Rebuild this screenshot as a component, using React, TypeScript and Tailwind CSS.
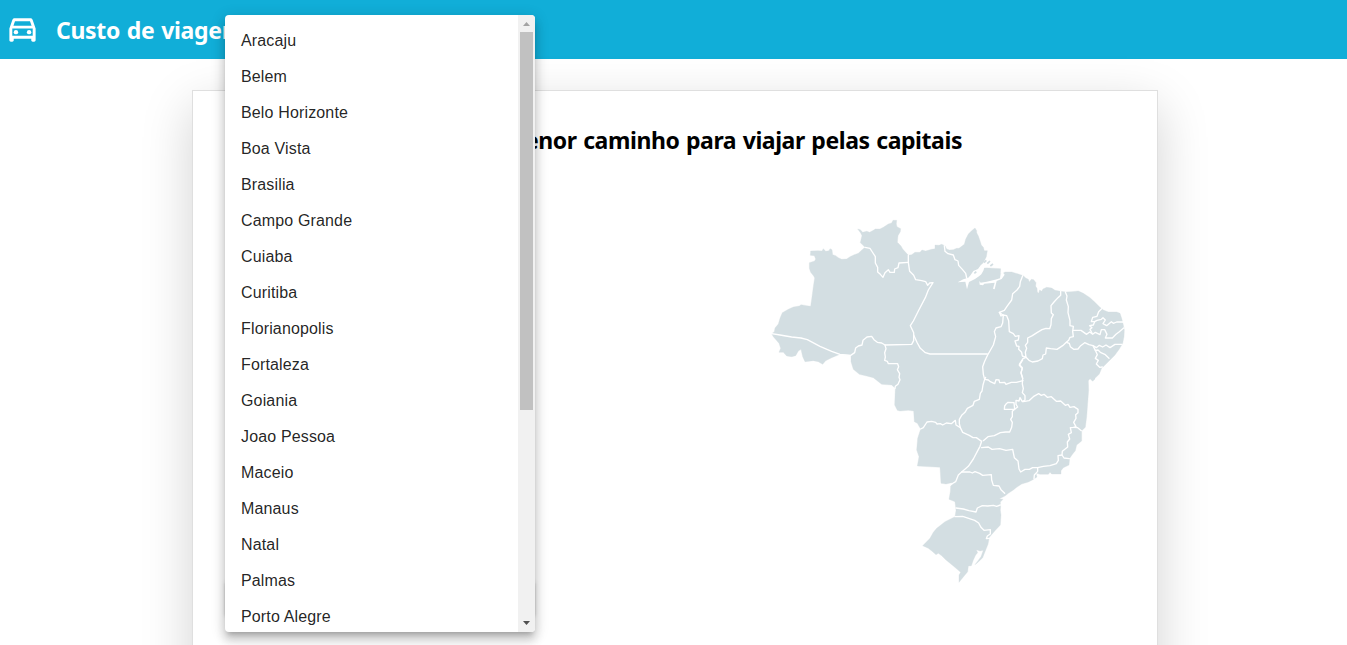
import { MdOutlineDirectionsCar } from "react-icons/md";

const capitals = [
  "Aracaju", "Belem", "Belo Horizonte", "Boa Vista", "Brasilia", "Campo Grande",
  "Cuiaba", "Curitiba", "Florianopolis", "Fortaleza", "Goiania", "Joao Pessoa",
  "Maceio", "Manaus", "Natal", "Palmas", "Porto Alegre",
];

// Moves a "x,y x,y ..." point list by the given offset.
const shift = (dx: number, dy: number, list: string) =>
  list
    .trim()
    .split(/\s+/)
    .map((p) => {
      const [x, y] = p.split(",").map(Number);
      return `${x + dx},${y + dy}`;
    })
    .join(" ");

const outline = [
  "20,371 28,365 30,354 40,342 45,325 52,308 70,298 85,291 103,288 108,284 125,287 137,289 141,260 145,230 149,204 146,198 137,187 133,175 133,158 149,153 152,147 148,137 136,136 137,123 160,122 171,123 175,116 182,124 192,122 195,116 201,119 203,134 212,137 220,143 230,148 245,147 255,140 268,134 280,130 288,122 300,112 291,103 286,98 289,85 291,77 287,69 278,57 286,59 293,67 305,64 314,67 325,61 331,57 345,57 355,52 370,42 380,39 384,31 395,31 394,42 396,50 407,56 406,65 399,77 397,97 408,108 413,117 430,136 440,134 450,127 465,127 471,120 482,123 500,118 510,116 510,105 522,106 530,103 540,107",
  shift(525, 0, "20,117 28,120 40,119 50,115 57,115 65,109 73,103 77,88 85,72 95,62 105,54 110,62 110,68 115,78 120,92 124,105 130,112 133,122 142,122 139,140 133,152 127,165 133,173 145,174 182,176 181,191 187,191 195,186 215,186 235,192 250,197 257,204 265,208 268,216 274,208 281,209 288,218 287,229 291,235 292,246 296,250 299,240 305,244 309,237 320,232 335,234 345,241 362,244 378,246 395,245 415,243 430,250 450,263 465,277 480,292 490,300 505,306 530,306 540,310 545,325 550,345 553,360 552,380 548,400 538,417 525,435 510,450 495,465 485,475 478,492 465,505"),
  shift(585, 390, "405,117 398,124 390,116 385,122 386,150 383,190 380,230 376,262 365,272 365,303 350,315 346,332 338,342 329,355 327,375 310,383 303,392 303,402 275,402 270,397 265,403 240,403 228,399 231,411 217,420 205,426 185,432 170,442 160,450"),
  shift(435, 750, "295,100 285,108 268,116 279,118 271,126 272,140 271,150 273,165 271,195 255,212 238,232 234,253 225,275 218,293 205,306 195,314 213,290 220,271 210,273 199,269 203,278 197,285 190,300 184,317 175,318 173,335 160,351 147,367 147,345 152,337 130,318 108,300 95,287 85,280 78,284 68,275 55,265 38,257 60,235 70,217 80,205 105,185 135,170 138,151 135,125 117,118 121,95 122,78 128,73 125,68 108,72 93,70 90,22 22,18"),
  shift(225, 390, "232,378 237,350 230,330 233,295 242,267 232,250 223,245 221,213 205,211 180,213 172,211 164,195 166,145 155,135 125,133 100,113 80,108 58,103 40,88 33,65 33,45 0,43"),
  "200,443 182,452 173,463 160,455 145,452 120,455 113,440 108,418 100,423 92,437 80,440 65,438 55,427 42,427 47,415 42,400 25,380",
].join(" ");

const rivers = [
  shift(555, 45, "112,95 104,110 92,121 84,132 70,138 62,150 55,158 40,163 23,172 46,170 51,193 57,171 75,162 88,153 94,148 100,137 103,128 112,126 106,118"),
  shift(555, 45, "88,168 92,173 110,170 135,164 150,160 152,146 158,142 164,149 155,162 140,168 134,193 129,191 134,173 103,176 99,181 89,179"),
];

const borders = [
  // Acre, Amazonas, Roraima, Rondônia
  "20,371 45,375 80,381 108,384 127,389 165,409 200,424 225,433 257,436 269,428 272,414 280,408 291,405 294,391 306,381 320,379 327,389 337,397 350,399 360,405 440,403 446,392 446,368 436,347 445,333 460,303 481,263 490,240 504,218 494,219 488,226 482,215 470,212 452,209 446,196 434,184 430,158 430,136",
  "300,112 315,115 322,126 331,140 331,159 338,172 338,186 346,193 354,202 360,188 370,179 375,187 388,187 389,177 399,173 402,159 430,157",
  // Pará and Mato Grosso
  "446,375 457,399 466,415 481,428 495,432 667,432",
  "360,405 363,416 359,428 361,441 359,451 367,454 370,461 398,461 401,470 397,479 404,491 402,502 405,509 399,523 391,529 390,535",
  "538,107 540,124 549,131 565,135 570,149 579,153 581,166 592,178 602,190 605,204",
  // Maranhão, Tocantins, Piauí
  shift(525, 0, "248,197 241,215 239,229 231,240 218,251 215,270 201,289 193,301 178,307 183,318 190,315 188,339 183,350 168,354 163,365 167,380 160,405 143,435 134,454 128,470 130,493 134,508"),
  shift(525, 0, "178,307 188,315 200,317 206,332 208,365 220,371 226,379 237,377 235,390 225,393 230,408 237,409 236,418 245,427 247,438 258,442 256,427 260,415 256,406 263,397 263,384 277,377 291,368 306,359 318,355 329,356 333,344 334,326 340,314 334,309 333,287 342,276 354,263 362,256 362,244"),
  shift(525, 0, "376,246 381,258 379,270 385,290 384,308 390,332 390,347 400,349 398,364 400,380 390,382 386,391 379,397 368,407 351,418 332,416 319,414 317,432 309,435 307,446 294,453 277,456 267,451 258,442 249,446 238,463 247,473 243,488 248,506"),
  // North-east states
  shift(525, 0, "485,296 476,305 471,319 458,322 454,335 464,335 471,331 484,328 489,323 496,330 489,341 500,347 514,335 520,340 530,336 550,336"),
  shift(525, 0, "400,361 423,361 440,373 449,366 458,373 466,367 480,374 484,359 494,359 501,373 496,384 517,384 528,373 538,365 551,354"),
  shift(525, 0, "464,335 460,345 449,347 456,353 450,358 456,369"),
  shift(525, 0, "379,397 388,400 391,410 401,418 414,417 422,407 434,398 447,404 459,407 469,413 478,406 488,411 498,405 510,413 525,403 546,403"),
  shift(525, 0, "459,407 466,421 474,420 481,427 496,434 507,445"),
  shift(525, 0, "466,421 472,434 466,445 475,451 469,462 479,472 487,471"),
  // Goiás, Tocantins, Bahia
  shift(585, 390, "74,118 85,120 91,125 104,131 108,119 117,120 119,128 134,127 138,133 154,127 169,127 189,122"),
  shift(585, 390, "188,60 178,76 187,86 183,99 188,114 187,132 190,146 187,158 195,167 195,180 187,185 180,173 177,183 168,181 168,193 173,201 165,207 157,214 157,230 152,238 157,247 155,262 149,276 137,276 121,278 103,287 84,290 70,302"),
  shift(585, 390, "190,185 207,182 220,170 236,161 244,166 252,163 262,172 274,170 289,184 302,183 316,196 324,193 330,202 342,200 354,208 354,218 347,224 348,235 341,247 348,260 341,262 331,263 334,278 325,283 329,297 322,306 323,321 307,334 306,345 294,347 295,361 289,371 270,377 250,379 233,383 218,383 208,388 195,388 182,396 177,387 174,363 163,353 158,328 138,331 119,326 96,328 85,321 65,323"),
  shift(585, 390, "341,262 353,263 364,272"),
  shift(585, 390, "306,345 312,354 328,356"),
  shift(585, 390, "233,383 233,394 223,405 222,416"),
  shift(585, 390, "139,191 144,187 162,188 164,208 133,208 134,198 139,191"),
  // Mato Grosso, Mato Grosso do Sul, São Paulo
  shift(225, 390, "437,112 433,121 429,135 426,153 421,160 418,178 403,184 399,196 382,205 375,217 365,226 358,238 358,251 361,263 368,277 388,286 399,293 409,293 425,304 420,319 412,334 400,357 385,379 365,396 355,405 347,425 335,432"),
  shift(225, 390, "242,267 250,263 261,246 275,244 287,247 291,252 301,251 308,255 319,249 334,251 346,241 348,255 361,263"),
  shift(225, 390, "365,396 390,396 397,399 405,395 419,400 428,406 454,404 455,420 460,436 477,438 483,449 494,460"),
  // Southern states
  shift(435, 750, "138,144 160,147 177,152 198,156 202,144 217,137 233,138 250,136 260,139 271,135"),
  shift(435, 750, "135,170 158,169 176,175 194,181 206,189 213,202 222,211 241,209 241,222 232,228 229,236 239,235"),
];

function BrazilMap() {
  return (
    <svg className="block h-[380px] w-[380px]" viewBox="0 0 1140 1140" aria-label="Brasil">
      <polygon points={outline} fill="#d3dee2" stroke="#d3dee2" strokeWidth="1" />
      {rivers.map((points) => (
        <polygon key={points} points={points} fill="#fff" />
      ))}
      <path d="M657 158l7-7M667 161l8-8M676 168l8-6M628 190l6-5" fill="none" stroke="#d3dee2" strokeWidth="5" />
      <g fill="none" stroke="#fff" strokeWidth="4" strokeLinejoin="round" strokeLinecap="round">
        {borders.map((points) => (
          <polyline key={points} points={points} />
        ))}
      </g>
    </svg>
  );
}

function CapitalMenu() {
  return (
    <div className="absolute left-[225px] top-[15px] flex h-[617px] w-[310px] overflow-hidden rounded bg-white shadow-[0_5px_5px_-3px_rgba(0,0,0,0.2),0_8px_10px_1px_rgba(0,0,0,0.14),0_3px_14px_2px_rgba(0,0,0,0.12)]">
      <ul className="flex-1 overflow-hidden py-2 font-['Liberation_Sans',Arial,sans-serif] text-base tracking-[0.15px] text-black/87">
        {capitals.map((name) => (
          <li key={name} className="flex h-9 items-center px-4 leading-6">{name}</li>
        ))}
      </ul>
      <div className="flex w-[17px] flex-col items-center bg-[#f1f1f1]">
        <svg className="h-[17px] w-[17px] shrink-0" viewBox="0 0 17 17">
          <path d="M5 11h7L8.500 7z" fill="#a3a3a3" />
        </svg>
        <div className="h-[378px] w-[13px] bg-[#c1c1c1]" />
        <svg className="mt-auto h-[17px] w-[17px] shrink-0" viewBox="0 0 17 17">
          <path d="M5 6h7L8.500 10z" fill="#505050" />
        </svg>
      </div>
    </div>
  );
}

export default function App() {
  return (
    <div className="relative h-[645px] overflow-hidden bg-white font-['Noto_Sans','Open_Sans',sans-serif]">
      <header className="flex h-[59px] items-center bg-[#11aed8] pl-[5px] text-white">
        <MdOutlineDirectionsCar className="mb-[2px] size-[35px]" />
        <span className="ml-4 mt-[2px] whitespace-nowrap text-[23px] font-bold tracking-[-0.3px] [word-spacing:1px]">Custo de viagem</span>
      </header>
      <main className="ml-[192px] mt-[31px] h-[700px] w-[966px] border border-black/[0.125] bg-white px-8 shadow-[0_16px_48px_rgba(0,0,0,0.175)]">
        <h1 className="mt-[31px] whitespace-nowrap pr-[163px] text-right text-[23px] font-bold leading-9 tracking-[-0.43px] text-black [word-spacing:1px]">
          Descubra o menor caminho para viajar pelas capitais
        </h1>
        <div className="mt-[52px] flex justify-between">
          <div className="flex h-[406px] w-[310px] flex-col justify-end">
            <div className="h-[36px] rounded shadow-[0_3px_1px_-2px_rgba(0,0,0,0.2),0_2px_2px_0_rgba(0,0,0,0.14),0_1px_5px_0_rgba(0,0,0,0.12)]" />
          </div>
          <div className="-mr-[20px]">
            <BrazilMap />
          </div>
        </div>
      </main>
      <CapitalMenu />
    </div>
  );
}
